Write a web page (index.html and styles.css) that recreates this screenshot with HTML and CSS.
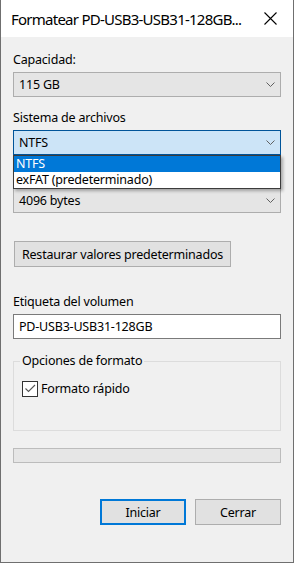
FILE: index.html
```html
<!DOCTYPE html>
<html lang="es">
  <head>
    <meta charset="UTF-8" />
    <title>Formatear</title>
    <link rel="stylesheet" href="styles.css">
  </head>
  <body>
    <div class="window">
      <div class="titlebar">
        <span class="title">Formatear PD-USB3-USB31-128GB...</span>
        <svg class="close" width="13" height="13" viewBox="0 0 13 13">
          <path d="M0.5 0.5 L12.5 12.5 M12.5 0.5 L0.5 12.5" stroke="#000" stroke-width="1.1" fill="none" />
        </svg>
      </div>
      <div class="content">
        <label class="label first">Capacidad:</label>
        <div class="combo">
          <span>115 GB</span>
          <svg class="chev" width="9" height="5" viewBox="0 0 9 5"><path d="M0.5 0.5 L4.5 4.5 L8.5 0.5" stroke="#606060" fill="none" /></svg>
        </div>

        <label class="label">Sistema de archivos</label>
        <div class="combo-wrap">
          <div class="combo open">
            <span>NTFS</span>
            <svg class="chev" width="9" height="5" viewBox="0 0 9 5"><path d="M0.5 0.5 L4.5 4.5 L8.5 0.5" stroke="#606060" fill="none" /></svg>
          </div>
          <!-- opened list lies over the allocation size label -->
          <ul class="droplist">
            <li class="selected">NTFS</li>
            <li>exFAT (predeterminado)</li>
          </ul>
        </div>

        <div class="label-spacer"></div>
        <div class="combo">
          <span>4096 bytes</span>
          <svg class="chev" width="9" height="5" viewBox="0 0 9 5"><path d="M0.5 0.5 L4.5 4.5 L8.5 0.5" stroke="#606060" fill="none" /></svg>
        </div>

        <button class="btn restore">Restaurar valores predeterminados</button>

        <label class="label volume">Etiqueta del volumen</label>
        <input class="textbox" type="text" value="PD-USB3-USB31-128GB" />

        <fieldset class="group">
          <legend>Opciones de formato</legend>
          <div class="check-row">
            <span class="checkbox">
              <svg width="13" height="13" viewBox="0 0 13 13"><path d="M1.5 6.5 L4.5 9.5 L11 3" stroke="#555" stroke-width="1.1" fill="none" /></svg>
            </span>
            <span>Formato rápido</span>
          </div>
        </fieldset>

        <div class="progress"></div>

        <div class="actions">
          <button class="btn default">Iniciar</button>
          <button class="btn">Cerrar</button>
        </div>
      </div>
    </div>
  </body>
</html>
```

FILE: styles.css
```css
* {
  margin: 0;
  padding: 0;
  box-sizing: border-box;
}

body {
  font-family: "Noto Sans", "Open Sans", sans-serif;
  font-size: 12.5px;
  letter-spacing: -0.2px;
  color: #000;
  background: #f0f0f0;
}

.window {
  width: 294px;
  height: 563px;
  border: 1px solid #6f6f6f;
  border-top: none;
  background: #f0f0f0;
  display: flex;
  flex-direction: column;
}

.titlebar {
  height: 37px;
  background: #fff;
  display: flex;
  align-items: center;
  justify-content: space-between;
  padding: 0 16px 0 10px;
}

.title {
  font-size: 15px;
  letter-spacing: -0.75px;
  white-space: nowrap;
}

.content {
  padding: 0 12px;
  display: flex;
  flex-direction: column;
}

.label {
  display: block;
  height: 17px;
  line-height: 17px;
  margin-top: 12px;
  margin-bottom: 4px;
}

.label.first {
  margin-top: 14px;
}

/* same room as a label, hidden under the open list */
.label-spacer {
  height: 33px;
}

.combo {
  height: 25px;
  border: 1px solid #adadad;
  background: #e5e5e5;
  display: flex;
  align-items: center;
  justify-content: space-between;
  padding: 0 5px 0 5px;
}

.combo.open {
  background: #cce4f7;
  border-color: #005499;
}

.combo-wrap {
  position: relative;
}

.droplist {
  position: absolute;
  top: 25px;
  left: 0;
  width: 268px;
  list-style: none;
  background: #fff;
  border: 1px solid #3c3c3c;
  box-shadow: 2px 2px 3px rgba(0, 0, 0, 0.3);
  z-index: 2;
}

.droplist li {
  height: 16px;
  line-height: 16px;
  padding-left: 2px;
}

.droplist li.selected {
  background: #0078d7;
  color: #fff;
}

.btn {
  font-family: inherit;
  font-size: 12.5px;
  letter-spacing: -0.2px;
  height: 26px;
  background: #e1e1e1;
  border: 1px solid #adadad;
  color: #000;
}

.restore {
  align-self: flex-start;
  margin-top: 28px;
  margin-left: 1px;
  padding: 0;
  width: 217px;
}

.label.volume {
  margin-top: 26px;
}

.textbox {
  height: 25px;
  border: 1px solid #7a7a7a;
  background: #fff;
  font-family: inherit;
  font-size: 12.5px;
  letter-spacing: -0.2px;
  padding: 0 5px;
}

.group {
  margin-top: 14px;
  height: 78px;
  border: 1px solid #dcdcdc;
  padding: 0 6px;
}

.group legend {
  padding: 0 2px;
  line-height: 16px;
}

.check-row {
  display: flex;
  align-items: center;
  gap: 3px;
  margin-top: 11px;
  margin-left: 2px;
}

.checkbox {
  width: 16px;
  height: 16px;
  border: 1px solid #333;
  background: #fff;
  display: flex;
  align-items: center;
  justify-content: center;
}

.progress {
  margin-top: 17px;
  height: 15px;
  border: 1px solid #bcbcbc;
  background: #e6e6e6;
}

.actions {
  display: flex;
  justify-content: flex-end;
  gap: 9px;
  margin-top: 36px;
}

.actions .btn {
  width: 86px;
}

.btn.default {
  border: 2px solid #0078d7;
}
```
